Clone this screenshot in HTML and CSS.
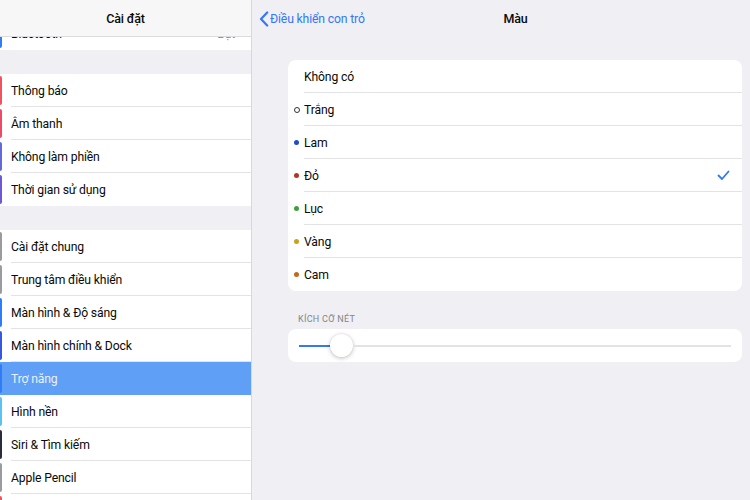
FILE: index.html
```html
<!DOCTYPE html>
<html>

<head>
  <meta charset="utf-8">
  <title>Cài đặt - Màu</title>
  <link rel="stylesheet" href="styles.css">
</head>

<body>
  <div class="split">
    <!-- left: settings list -->
    <div class="sidebar">
      <div class="side-head">Cài đặt</div>
      <div class="side-scroll">
        <div class="side-list">
          <div class="group">
            <div class="row"><span class="icon blue"></span><span class="label">Bluetooth<span class="value">Bật</span></span></div>
          </div>
          <div class="group">
            <div class="row"><span class="icon red"></span><span class="label">Thông báo</span></div>
            <div class="row"><span class="icon rose"></span><span class="label">Âm thanh</span></div>
            <div class="row"><span class="icon indigo"></span><span class="label">Không làm phiền</span></div>
            <div class="row"><span class="icon violet"></span><span class="label">Thời gian sử dụng</span></div>
          </div>
          <div class="group">
            <div class="row"><span class="icon gray"></span><span class="label">Cài đặt chung</span></div>
            <div class="row"><span class="icon gray"></span><span class="label">Trung tâm điều khiển</span></div>
            <div class="row"><span class="icon blue"></span><span class="label">Màn hình &amp; Độ sáng</span></div>
            <div class="row"><span class="icon royal"></span><span class="label">Màn hình chính &amp; Dock</span></div>
            <div class="row active"><span class="icon blue"></span><span class="label">Trợ năng</span></div>
            <div class="row"><span class="icon sky"></span><span class="label">Hình nền</span></div>
            <div class="row"><span class="icon dark"></span><span class="label">Siri &amp; Tìm kiếm</span></div>
            <div class="row"><span class="icon gray"></span><span class="label">Apple Pencil</span></div>
            <div class="row"><span class="icon red"></span><span class="label">Touch ID &amp; Mật mã</span></div>
          </div>
        </div>
      </div>
    </div>

    <!-- right: detail -->
    <div class="detail">
      <div class="detail-head">
        <a class="back">
          <svg width="10" height="16" viewBox="0 0 10 16"><path d="M8.2 1.5 2 8l6.2 6.5" fill="none" stroke="#3478f6" stroke-width="2.2" stroke-linecap="round" stroke-linejoin="round"/></svg>
          <span>Điều khiển con trỏ</span>
        </a>
        <div class="title">Màu</div>
      </div>

      <div class="card">
        <div class="opt"><span class="dot none"></span><span class="opt-label">Không có</span></div>
        <div class="opt"><span class="dot white"></span><span class="opt-label">Trắng</span></div>
        <div class="opt"><span class="dot" style="background:#1b4fc4"></span><span class="opt-label">Lam</span></div>
        <div class="opt"><span class="dot" style="background:#b3342a"></span><span class="opt-label">Đỏ
          <svg class="check" width="13" height="11" viewBox="0 0 13 11"><path d="M1.5 5.5 5 9 11.5 1.5" fill="none" stroke="#3478f6" stroke-width="1.8" stroke-linecap="round" stroke-linejoin="round"/></svg></span></div>
        <div class="opt"><span class="dot" style="background:#3fa03a"></span><span class="opt-label">Lục</span></div>
        <div class="opt"><span class="dot" style="background:#c9a21c"></span><span class="opt-label">Vàng</span></div>
        <div class="opt"><span class="dot" style="background:#c26a1c"></span><span class="opt-label last">Cam</span></div>
      </div>

      <div class="section-title">KÍCH CỠ NÉT</div>
      <div class="card slider-card">
        <div class="slider">
          <div class="fill" style="width:7.2%"></div>
          <div class="thumb"></div>
          <div class="rest"></div>
        </div>
      </div>
    </div>
  </div>
</body>

</html>
```

FILE: styles.css
```css
/* Reset */
body {
  margin: 0;
  padding: 0;
  font-family: Roboto, "Liberation Sans", sans-serif;
  font-size: 12.2px;
  letter-spacing: -0.15px;
  color: #0a0a0a;
}

.split {
  display: flex;
  width: 750px;
  height: 500px;
  overflow: hidden;
}

/* Sidebar */
.sidebar {
  width: 251px;
  border-right: 1px solid #d8d8dc;
  background-color: #efeff4;
  display: flex;
  flex-direction: column;
  overflow: hidden;
  flex-shrink: 0;
}

.side-head {
  height: 36px;
  line-height: 38px;
  text-align: center;
  font-size: 12.5px;
  font-weight: 500;
  background-color: #f7f7f8;
  border-bottom: 1px solid #dcdce0;
  flex-shrink: 0;
}

.side-scroll {
  flex: 1;
  overflow: hidden;
}

.side-list {
  margin-top: -20px;
}

.group {
  background-color: #ffffff;
  margin-bottom: 24px;
}

.row {
  display: flex;
  align-items: center;
  height: 33px;
}

.icon {
  width: 29px;
  height: 29px;
  margin-left: -27px;
  border-radius: 0 2px 2px 0;
  flex-shrink: 0;
}

.icon.blue { background-color: #2f7cf6; }
.icon.red { background-color: #f0535d; }
.icon.rose { background-color: #ee4a68; }
.icon.indigo { background-color: #6468d8; }
.icon.violet { background-color: #6a58d4; }
.icon.gray { background-color: #9a9a9f; }
.icon.royal { background-color: #3757de; }
.icon.sky { background-color: #5ac2f2; }
.icon.dark { background-color: #2b2b3c; }

.label {
  flex: 1;
  display: flex;
  align-items: center;
  align-self: stretch;
  margin-left: 9px;
  padding-top: 1px;
  border-bottom: 1px solid #e3e3e6;
}

.group .row:last-child .label {
  border-bottom: none;
}

.value {
  margin-left: auto;
  margin-right: 16px;
  color: #8e8e93;
}

.row.active {
  background-color: #5f9ff5;
  color: #e8f0fe;
}

.row.active .label {
  border-bottom-color: #5f9ff5;
}

/* Detail pane */
.detail {
  flex: 1;
  background-color: #efeff4;
}

.detail-head {
  display: flex;
  align-items: center;
  height: 37px;
  padding-left: 7px;
}

.back {
  display: flex;
  align-items: center;
  gap: 1px;
  color: #3478f6;
  width: 108px;
  white-space: nowrap;
  flex-shrink: 0;
}

.back svg {
  flex-shrink: 0;
}

.title {
  flex: 1;
  text-align: center;
  padding-right: 86px;
  font-size: 12.5px;
  font-weight: 500;
}

.card {
  background-color: #ffffff;
  border-radius: 8px;
  margin: 23px 8px 0 36px;
}

.opt {
  display: flex;
  align-items: center;
  height: 33px;
  padding-left: 6px;
}

.dot {
  width: 5px;
  height: 5px;
  border-radius: 50%;
  margin-right: 5px;
  flex-shrink: 0;
}

.dot.none {
  background: transparent;
}

.dot.white {
  width: 4px;
  height: 4px;
  border: 1px solid #333333;
  margin-right: 4px;
}

.opt-label {
  flex: 1;
  align-self: stretch;
  display: flex;
  align-items: center;
  padding-top: 1px;
  border-bottom: 1px solid #e3e3e6;
}

.opt-label.last {
  border-bottom: none;
}

.check {
  margin-left: auto;
  margin-right: 12px;
}

.section-title {
  margin: 23px 0 5px 46px;
  font-size: 9px;
  color: #85858a;
  letter-spacing: 0.3px;
}

.slider-card {
  margin-top: 0;
  height: 33px;
  display: flex;
  align-items: center;
  padding: 0 11px;
}

.slider {
  flex: 1;
  display: flex;
  align-items: center;
}

.fill {
  height: 2px;
  background-color: #3478f6;
}

.thumb {
  width: 23px;
  height: 23px;
  border-radius: 50%;
  background-color: #ffffff;
  box-shadow: 0 1px 4px rgba(0, 0, 0, 0.25), 0 0 0 0.5px rgba(0, 0, 0, 0.06);
  flex-shrink: 0;
}

.rest {
  flex: 1;
  height: 2px;
  background-color: #e3e3e6;
}
```
